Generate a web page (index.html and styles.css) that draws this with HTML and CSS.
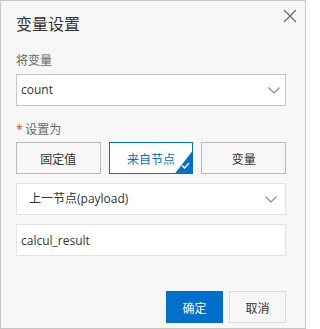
FILE: index.html
```html
<!DOCTYPE html>
<html lang="zh-CN">
<head>
<meta charset="utf-8">
<link rel="stylesheet" href="styles.css">
</head>
<body>
<div class="dialog">
  <div class="header">
    <span class="title">变量设置</span>
    <button class="close" aria-label="关闭">
      <svg width="14" height="14" viewBox="0 0 14 14"><path d="M1 1 L13 13 M13 1 L1 13" stroke="#6f6f6f" stroke-width="1.4" fill="none"/></svg>
    </button>
  </div>
  <div class="label label-first">将变量</div>
  <div class="select select-dark">
    <span class="value">count</span>
    <svg class="chev" width="12" height="7" viewBox="0 0 12 7"><path d="M0.5 0.5 L6 6 L11.5 0.5" stroke="#888" stroke-width="1.1" fill="none"/></svg>
  </div>
  <div class="label label-second"><span class="req">*</span> 设置为</div>
  <div class="seg">
    <div class="seg-btn">固定值</div>
    <div class="seg-btn active">来自节点
      <span class="corner">
        <svg class="tick" width="9" height="7" viewBox="0 0 9 7"><path d="M1 3.5 L3.5 6 L8 1" stroke="#fff" stroke-width="1.5" fill="none"/></svg>
      </span>
    </div>
    <div class="seg-btn">变量</div>
  </div>
  <div class="select select-light">
    <span class="value value-indent">上一节点(payload)</span>
    <svg class="chev" width="12" height="7" viewBox="0 0 12 7"><path d="M0.5 0.5 L6 6 L11.5 0.5" stroke="#888" stroke-width="1.1" fill="none"/></svg>
  </div>
  <div class="input">calcul_result</div>
  <div class="footer">
    <button class="btn btn-primary">确定</button>
    <button class="btn btn-normal">取消</button>
  </div>
</div>
</body>
</html>
```
FILE: styles.css
```css
* { box-sizing: border-box; }
html, body { margin: 0; padding: 0; }
body {
  font-family: "Open Sans", "Noto Sans CJK SC", sans-serif;
  font-size: 12px;
  color: #333;
}
.dialog {
  width: 306px;
  height: 329px;
  border: 1px solid #c6c6c6;
  background: #f7f7f7;
  padding: 0 19px 0 15px;
  display: flex;
  flex-direction: column;
}
.header {
  display: flex;
  justify-content: space-between;
  align-items: flex-start;
  padding-top: 11px;
  height: 33px;
}
.title {
  font-size: 16px;
  line-height: 22px;
  color: #333;
  font-family: "Noto Sans CJK SC", sans-serif;
}
.close {
  border: none;
  background: none;
  padding: 0;
  margin: -3px -11px 0 0;
  width: 14px;
  height: 14px;
  display: flex;
}
.label {
  line-height: 18px;
  color: #666;
  font-family: "Noto Sans CJK SC", sans-serif;
}
.label-first { margin-top: 17px; }
.label-second { margin-top: 14px; }
.req { color: #e8452c; font-family: "Open Sans", sans-serif; }
.select {
  height: 32px;
  margin-top: 5px;
  background: #fff;
  display: flex;
  align-items: center;
  justify-content: space-between;
  padding: 0 5px 0 4px;
}
.select-dark { border: 1px solid #c4c4c4; }
.select-light { border: 1px solid #e3e3e3; margin-top: 9px; padding-right: 8px; }
.value { line-height: 18px; }
.value-indent { padding-left: 8px; }
.seg {
  margin-top: 3px;
  display: grid;
  grid-template-columns: 1fr 1fr 1fr;
  gap: 8px;
}
.seg-btn {
  position: relative;
  height: 32px;
  border: 1px solid #b9b9b9;
  background: #f7f7f7;
  display: flex;
  align-items: center;
  justify-content: center;
  color: #333;
  font-family: "Noto Sans CJK SC", sans-serif;
  overflow: hidden;
}
.seg-btn.active {
  border-color: #0070cc;
  background: #fff;
  color: #0070cc;
}
.corner {
  position: absolute;
  right: 0;
  bottom: 0;
  width: 17px;
  height: 22px;
  background: #0070cc;
  clip-path: polygon(100% 0, 100% 100%, 0 100%);
}
.tick {
  position: absolute;
  right: 2px;
  bottom: 4px;
}
.input {
  height: 32px;
  margin-top: 9px;
  border: 1px solid #e3e3e3;
  background: #fff;
  padding: 0 4px;
  display: flex;
  align-items: center;
}
.footer {
  margin-top: 35px;
  display: flex;
  justify-content: flex-end;
  gap: 6px;
}
.btn {
  width: 57px;
  height: 32px;
  font-size: 12px;
  font-family: "Noto Sans CJK SC", sans-serif;
  padding: 0;
  cursor: pointer;
}
.btn-primary {
  background: #0070cc;
  color: #fff;
  border: none;
}
.btn-normal {
  background: #f7f7f7;
  color: #333;
  border: 1px solid #dcdcdc;
}
```
